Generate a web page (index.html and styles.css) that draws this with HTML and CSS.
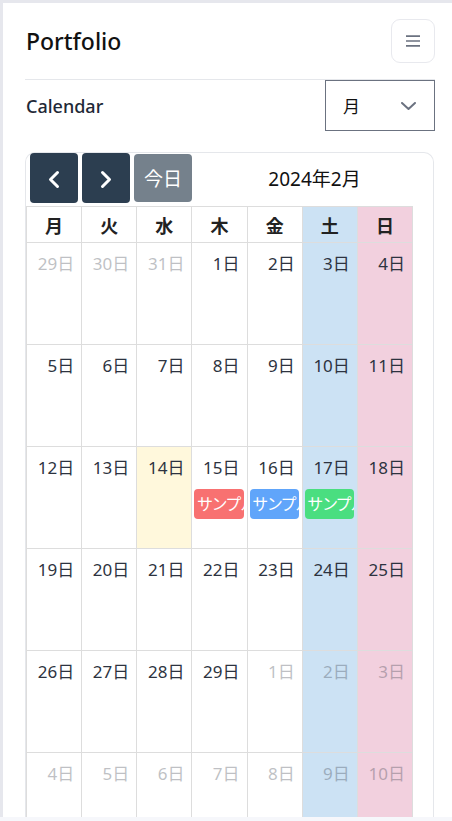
FILE: index.html
```html
<!DOCTYPE html>
<html lang="ja">
<head>
<meta charset="utf-8">
<title>Portfolio - Calendar</title>
<link rel="stylesheet" href="styles.css">
</head>
<body>
<div class="page">
  <header class="topbar">
    <h1 class="brand">Portfolio</h1>
    <button class="menu-btn" type="button" aria-label="menu">
      <svg width="14" height="12" viewBox="0 0 14 12"><path d="M0 1.2H14M0 6H14M0 10.8H14" stroke="#6b7280" stroke-width="1.7" fill="none"/></svg>
    </button>
  </header>

  <div class="section-head">
    <h2 class="section-title">Calendar</h2>
    <div class="select">
      <span>月</span>
      <svg width="15" height="8" viewBox="0 0 15 8"><path d="M1 1L7.5 7L14 1" stroke="#6b7280" stroke-width="2" fill="none" stroke-linecap="round" stroke-linejoin="round"/></svg>
    </div>
  </div>

  <div class="calendar">
    <div class="toolbar">
      <div class="nav-group">
        <button class="nav-btn" type="button" aria-label="prev">
          <svg class="chev" width="12" height="19" viewBox="0 0 12 19"><path d="M9.5 2.5L2.5 9.5L9.5 16.5" stroke="#fff" stroke-width="3" fill="none" stroke-linecap="round" stroke-linejoin="round"/></svg>
        </button>
        <button class="nav-btn" type="button" aria-label="next">
          <svg class="chev" width="12" height="19" viewBox="0 0 12 19"><path d="M2.5 2.5L9.5 9.5L2.5 16.5" stroke="#fff" stroke-width="3" fill="none" stroke-linecap="round" stroke-linejoin="round"/></svg>
        </button>
      </div>
      <button class="today-btn" type="button" disabled>今日</button>
      <div class="cal-title">2024年2月</div>
    </div>

    <table class="grid">
      <thead>
        <tr>
          <th>月</th><th>火</th><th>水</th><th>木</th><th>金</th><th class="sat">土</th><th class="sun">日</th>
        </tr>
      </thead>
      <tbody>
        <tr>
          <td class="muted"><div class="num">29日</div></td>
          <td class="muted"><div class="num">30日</div></td>
          <td class="muted"><div class="num">31日</div></td>
          <td><div class="num">1日</div></td>
          <td><div class="num">2日</div></td>
          <td class="sat"><div class="num">3日</div></td>
          <td class="sun"><div class="num">4日</div></td>
        </tr>
        <tr>
          <td><div class="num">5日</div></td>
          <td><div class="num">6日</div></td>
          <td><div class="num">7日</div></td>
          <td><div class="num">8日</div></td>
          <td><div class="num">9日</div></td>
          <td class="sat"><div class="num">10日</div></td>
          <td class="sun"><div class="num">11日</div></td>
        </tr>
        <tr>
          <td><div class="num">12日</div></td>
          <td><div class="num">13日</div></td>
          <td class="today"><div class="num">14日</div></td>
          <td><div class="num">15日</div><div class="event red">サンプル予定</div></td>
          <td><div class="num">16日</div><div class="event blue">サンプル予定</div></td>
          <td class="sat"><div class="num">17日</div><div class="event green">サンプル予定</div></td>
          <td class="sun"><div class="num">18日</div></td>
        </tr>
        <tr>
          <td><div class="num">19日</div></td>
          <td><div class="num">20日</div></td>
          <td><div class="num">21日</div></td>
          <td><div class="num">22日</div></td>
          <td><div class="num">23日</div></td>
          <td class="sat"><div class="num">24日</div></td>
          <td class="sun"><div class="num">25日</div></td>
        </tr>
        <tr>
          <td><div class="num">26日</div></td>
          <td><div class="num">27日</div></td>
          <td><div class="num">28日</div></td>
          <td><div class="num">29日</div></td>
          <td class="muted"><div class="num">1日</div></td>
          <td class="sat muted"><div class="num">2日</div></td>
          <td class="sun muted"><div class="num">3日</div></td>
        </tr>
        <tr>
          <td class="muted"><div class="num">4日</div></td>
          <td class="muted"><div class="num">5日</div></td>
          <td class="muted"><div class="num">6日</div></td>
          <td class="muted"><div class="num">7日</div></td>
          <td class="muted"><div class="num">8日</div></td>
          <td class="sat muted"><div class="num">9日</div></td>
          <td class="sun muted"><div class="num">10日</div></td>
        </tr>
      </tbody>
    </table>
  </div>
</div>
</body>
</html>
```

FILE: styles.css
```css
* {
  box-sizing: border-box;
}

html, body {
  margin: 0;
  padding: 0;
}

body {
  background: #f6f7fb;
  font-family: "Noto Sans", "Noto Sans CJK JP", sans-serif;
  color: #1f2937;
  overflow: hidden;
}

.page {
  height: 817px;
  overflow: hidden;
  background: #ffffff;
  border-top: 3px solid #e6e7ed;
  border-left: 3px solid #e6e7ed;
  padding: 16px 17px 0 22px;
}

.topbar {
  display: flex;
  align-items: center;
  justify-content: space-between;
  padding-bottom: 16px;
  border-bottom: 1px solid #e5e7eb;
}

.brand {
  margin: 0 0 0 1px;
  font-size: 23px;
  font-weight: 500;
  color: #111111;
  line-height: 44px;
}

.menu-btn {
  width: 44px;
  height: 44px;
  border: 1px solid #e8e9ee;
  border-radius: 9px;
  background: #ffffff;
  display: flex;
  align-items: center;
  justify-content: center;
  padding: 0;
}

.section-head {
  display: flex;
  align-items: center;
  justify-content: space-between;
  margin-bottom: 21px;
}

.section-title {
  margin: 0 0 0 1px;
  font-size: 18px;
  font-weight: 500;
  color: #1f2937;
}

.select {
  width: 110px;
  height: 51px;
  border: 1px solid #6b7280;
  display: flex;
  align-items: center;
  justify-content: space-between;
  padding: 0 18px 0 17px;
  font-size: 17px;
  color: #111111;
}

.calendar {
  margin-right: 1px;
  border: 1px solid #e5e7eb;
  border-bottom: none;
  border-radius: 10px 10px 0 0;
  height: 700px;
}

.toolbar {
  display: flex;
  align-items: center;
  gap: 4px;
  padding: 0 0 3px 4px;
}

.nav-group {
  display: flex;
  gap: 4px;
}

.nav-btn {
  width: 48px;
  height: 50px;
  border: none;
  border-radius: 4px;
  background: #2c3e50;
  display: flex;
  align-items: center;
  justify-content: center;
  padding: 0;
}

.chev {
  margin-top: 3px;
}

.today-btn {
  width: 58px;
  height: 48px;
  border: none;
  border-radius: 4px;
  background: #2c3e50;
  opacity: 0.65;
  color: #ffffff;
  font-family: inherit;
  font-size: 19px;
  padding: 0;
}

.cal-title {
  flex: 1;
  text-align: center;
  font-size: 19px;
  color: #111111;
}

.grid {
  border-collapse: collapse;
  table-layout: fixed;
  width: 387px;
}

.grid th,
.grid td {
  border: 1px solid #dddddd;
  padding: 0;
}

.grid th {
  height: 36px;
  font-size: 18px;
  font-weight: 700;
  color: #222222;
}

.grid td {
  height: 102px;
  vertical-align: top;
}

.sat {
  background: #cce2f4;
}

.sun {
  background: #f2d0de;
}

.today {
  background: #fff8dc;
}

.num {
  text-align: right;
  padding: 9px 7px 0 0;
  font-size: 17px;
  line-height: 24px;
  color: #2d3340;
}

.muted .num {
  opacity: 0.3;
}

.event {
  margin: 9px 3px 0 2px;
  height: 30px;
  line-height: 30px;
  border-radius: 4px;
  padding-left: 3px;
  color: #ffffff;
  font-size: 16px;
  font-feature-settings: "palt";
  white-space: nowrap;
  overflow: hidden;
}

.red {
  background: #f87171;
}

.blue {
  background: #60a5fa;
}

.green {
  background: #4ade80;
}
```
